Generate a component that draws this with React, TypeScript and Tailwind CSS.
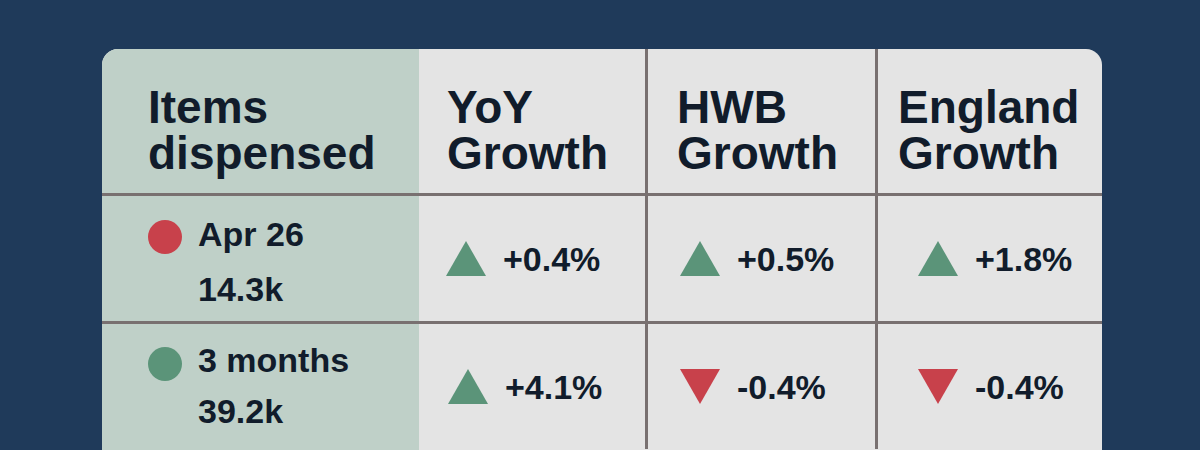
import React from "react";

const Up = () => (
  <svg width="40" height="35" viewBox="0 0 40 35" className="shrink-0">
    <polygon points="20,0 40,35 0,35" fill="#5b9479" />
  </svg>
);
const Down = () => (
  <svg width="40" height="35" viewBox="0 0 40 35" className="shrink-0">
    <polygon points="0,0 40,0 20,35" fill="#c8414b" />
  </svg>
);

const Val = ({ up, text, pl }: { up: boolean; text: string; pl: string }) => (
  <div className={`flex items-center gap-[17px] ${pl}`}>
    {up ? <Up /> : <Down />}
    <span className="text-[34px] leading-[40px] font-bold">{text}</span>
  </div>
);

export default function App() {
  return (
    <div
      className="w-[1200px] h-[450px] overflow-hidden bg-[#1f3a5a] pt-[49px] pl-[102px] text-[#111c2b]"
      style={{ fontFamily: '"Liberation Sans", Arial, sans-serif' }}
    >
      <div className="w-[1000px] rounded-t-[16px] overflow-hidden bg-[#e4e4e4] grid grid-cols-[317px_226px_230px_227px] grid-rows-[147px_128px_140px] h-[430px]">
        {/* Header row */}
        <div className="bg-[#bfd0c8] border-b-[3px] border-[#787070] pl-[46px] pt-[35px] text-[46px] leading-[46px] font-bold">
          Items
          <br />
          dispensed
        </div>
        <div className="border-b-[3px] border-[#787070] pl-[28px] pt-[35px] text-[46px] leading-[46px] font-bold">
          YoY
          <br />
          Growth
        </div>
        <div className="border-b-[3px] border-l-[3px] border-[#787070] pl-[29px] pt-[35px] text-[46px] leading-[46px] font-bold">
          HWB
          <br />
          Growth
        </div>
        <div className="border-b-[3px] border-l-[3px] border-[#787070] pl-[20px] pt-[35px] text-[46px] leading-[46px] font-bold">
          England
          <br />
          Growth
        </div>

        {/* Row 1 */}
        <div className="bg-[#bfd0c8] border-b-[3px] border-[#787070] pl-[46px] pt-[18px] flex gap-4">
          <div className="w-[34px] h-[34px] rounded-full bg-[#c8414b] mt-[6px] shrink-0" />
          <div className="text-[34px] leading-[40px] font-bold">
            <div>Apr 26</div>
            <div className="mt-[15px]">14.3k</div>
          </div>
        </div>
        <div className="border-b-[3px] border-[#787070] flex">
          <Val up text="+0.4%" pl="pl-[27px]" />
        </div>
        <div className="border-b-[3px] border-l-[3px] border-[#787070] flex">
          <Val up text="+0.5%" pl="pl-[32px]" />
        </div>
        <div className="border-b-[3px] border-l-[3px] border-[#787070] flex">
          <Val up text="+1.8%" pl="pl-[40px]" />
        </div>

        {/* Row 2 */}
        <div className="bg-[#bfd0c8] pl-[46px] pt-[16px] flex gap-4">
          <div className="w-[34px] h-[34px] rounded-full bg-[#5b9479] mt-[7px] shrink-0" />
          <div className="text-[34px] leading-[40px] font-bold">
            <div>3 months</div>
            <div className="mt-[11px]">39.2k</div>
          </div>
        </div>
        <div className="flex h-[125px]">
          <Val up text="+4.1%" pl="pl-[29px]" />
        </div>
        <div className="border-l-[3px] border-[#787070] flex h-[125px]">
          <Val up={false} text="-0.4%" pl="pl-[32px]" />
        </div>
        <div className="border-l-[3px] border-[#787070] flex h-[125px]">
          <Val up={false} text="-0.4%" pl="pl-[40px]" />
        </div>
      </div>
    </div>
  );
}
